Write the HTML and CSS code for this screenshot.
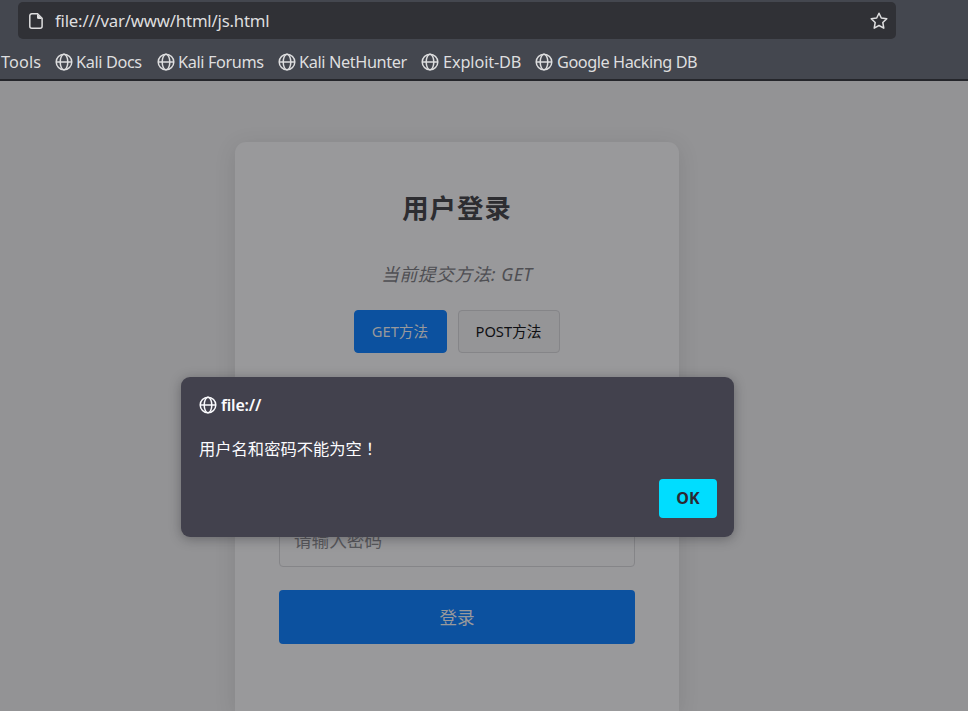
FILE: index.html
```html
<!DOCTYPE html>
<html lang="zh-CN">
<head>
<meta charset="utf-8">
<title>用户登录</title>
<link rel="stylesheet" href="styles.css">
</head>
<body>
<svg class="defs" aria-hidden="true">
  <symbol id="globe" viewBox="0 0 18 18">
    <g fill="none" stroke="currentColor" stroke-width="1.5">
      <circle cx="9" cy="9" r="7.8"/>
      <ellipse cx="9" cy="9" rx="3.8" ry="7.8"/>
      <path d="M1.2 9h15.6"/>
    </g>
  </symbol>
</svg>
<header class="chrome">
  <div class="urlbar">
    <svg class="doc" viewBox="0 0 14 16"><path d="M2.8.8h5.7l4.6 4.6v7.8a2 2 0 0 1-2 2H2.8a2 2 0 0 1-2-2V2.8a2 2 0 0 1 2-2z" fill="none" stroke="currentColor" stroke-width="1.5"/><path d="M8 1v3.5A1.5 1.5 0 0 0 9.5 6H13z" fill="currentColor"/></svg>
    <span class="url">file:///var/www/html/js.html</span>
    <svg class="star" viewBox="0 0 18 18"><path d="M9 1.2 11.3 6l5.5.7-4 3.8 1 5.7L9 13.5l-4.8 2.7 1-5.7-4-3.8L6.7 6z" fill="none" stroke="currentColor" stroke-width="1.5" stroke-linejoin="round"/></svg>
  </div>
  <nav class="bookmarks">
    <span class="mark tools">Tools</span>
    <span class="mark docs"><svg class="globe"><use href="#globe"/></svg><span>Kali Docs</span></span>
    <span class="mark forums"><svg class="globe"><use href="#globe"/></svg><span>Kali Forums</span></span>
    <span class="mark hunter"><svg class="globe"><use href="#globe"/></svg><span>Kali NetHunter</span></span>
    <span class="mark exploit"><svg class="globe"><use href="#globe"/></svg><span>Exploit-DB</span></span>
    <span class="mark hacking"><svg class="globe"><use href="#globe"/></svg><span>Google Hacking DB</span></span>
  </nav>
</header>
<main class="page">
  <section class="card">
    <h1>用户登录</h1>
    <p class="method">当前提交方法: GET</p>
    <div class="switch">
      <button class="choice active">GET方法</button>
      <button class="choice post">POST方法</button>
    </div>
    <div class="field">请输入密码</div>
    <button class="submit">登录</button>
  </section>
</main>
<div class="dialog" role="alertdialog">
  <div class="origin"><svg class="globe"><use href="#globe"/></svg><span>file://</span></div>
  <p class="message">用户名和密码不能为空<span class="bang" lang="zh-TW">！</span></p>
  <button class="ok">OK</button>
</div>
</body>
</html>
```
FILE: styles.css
```css
* { box-sizing: border-box; }
body {
  margin: 0;
  height: 711px;
  overflow: hidden;
  position: relative;
  background: #939395;
  font-family: "Noto Sans", "Noto Sans CJK SC", sans-serif;
}
button { font-family: inherit; padding: 0; }
.defs { display: none; }
svg { display: block; flex: none; }
.chrome {
  height: 81px;
  padding-top: 2px;
  background: #44474f;
  border-bottom: 2px solid #25262b;
  color: #dededf;
}
.urlbar {
  display: flex;
  align-items: center;
  width: 878px;
  height: 37px;
  margin-left: 18px;
  padding: 0 8px 0 11px;
  border-radius: 5px;
  background: #303136;
}
.doc { width: 14px; height: 16px; }
.url { margin-left: 12px; font-size: 16.8px; letter-spacing: -.2px; white-space: nowrap; }
.star { width: 18px; height: 18px; margin-left: auto; }
.bookmarks {
  display: flex;
  align-items: center;
  height: 24px;
  margin-top: 11px;
  padding-left: 1px;
}
.mark {
  display: flex;
  align-items: center;
  flex: none;
  gap: 3px;
  font-size: 16.3px;
  letter-spacing: -.38px;
  white-space: nowrap;
}
.globe { width: 18px; height: 18px; }
.tools { width: 54px; letter-spacing: .1px; }
.docs { width: 102px; }
.forums { width: 121px; }
.hunter { width: 143px; }
.exploit { width: 114px; gap: 4px; letter-spacing: -.12px; }
.hacking { gap: 4px; letter-spacing: -.45px; }
.page { display: flex; height: 630px; padding: 61px 0 0 235px; overflow: hidden; }
.card {
  width: 444px;
  height: 569px;
  padding: 44px 44px 0;
  border-radius: 11px 11px 0 0;
  background: #99999b;
  box-shadow: 0 4px 22px rgba(0, 0, 0, .1);
}
h1 {
  margin: 0;
  height: 44px;
  line-height: 44px;
  font-size: 26.4px;
  font-weight: 600;
  letter-spacing: 1px;
  text-align: center;
  color: #2d2d31;
}
.method {
  margin: 31px 0 0;
  height: 26px;
  line-height: 26px;
  font-size: 17.8px;
  letter-spacing: .5px;
  font-style: italic;
  text-align: center;
  color: #4f4f53;
}
.switch { display: flex; justify-content: center; gap: 11px; margin-top: 23px; }
.choice {
  width: 102px;
  height: 43px;
  padding: 0 1px 2px 0;
  border: 1px solid #858588;
  border-radius: 4px;
  background: #959597;
  color: #101013;
  font-size: 14.7px;
}
.active { width: 93px; border-color: #0c519f; background: #0c519f; color: #99999b; }
.field {
  height: 53px;
  margin-top: 161px;
  padding-left: 14px;
  border: 1px solid #858588;
  border-radius: 4px;
  line-height: 51px;
  font-size: 17.6px;
  color: #58585c;
}
.submit {
  display: block;
  width: 100%;
  height: 54px;
  margin-top: 23px;
  padding-bottom: 2px;
  border: 0;
  border-radius: 4px;
  background: #0c519f;
  color: #99999b;
  font-size: 17.6px;
}
.dialog {
  position: absolute;
  left: 181px;
  top: 377px;
  width: 553px;
  height: 160px;
  padding: 17px 17px 18px 18px;
  border-radius: 9px;
  background: #42414d;
  box-shadow: 0 2px 12px rgba(20, 20, 26, .35);
  color: #fbfbfe;
}
.origin { display: flex; align-items: center; gap: 4px; height: 22px; font-size: 16px; font-weight: 600; letter-spacing: -.2px; }
.message { margin: 19px 0 0; height: 26px; line-height: 26px; font-size: 16.3px; }
.bang { font-family: "Noto Sans CJK TC", sans-serif; }
.ok {
  display: block;
  width: 58px;
  height: 39px;
  margin: 18px 0 0 auto;
  padding-bottom: 1px;
  border: 0;
  border-radius: 4px;
  background: #00ddff;
  color: #2b2a33;
  font-size: 16px;
  font-weight: 700;
}
```
